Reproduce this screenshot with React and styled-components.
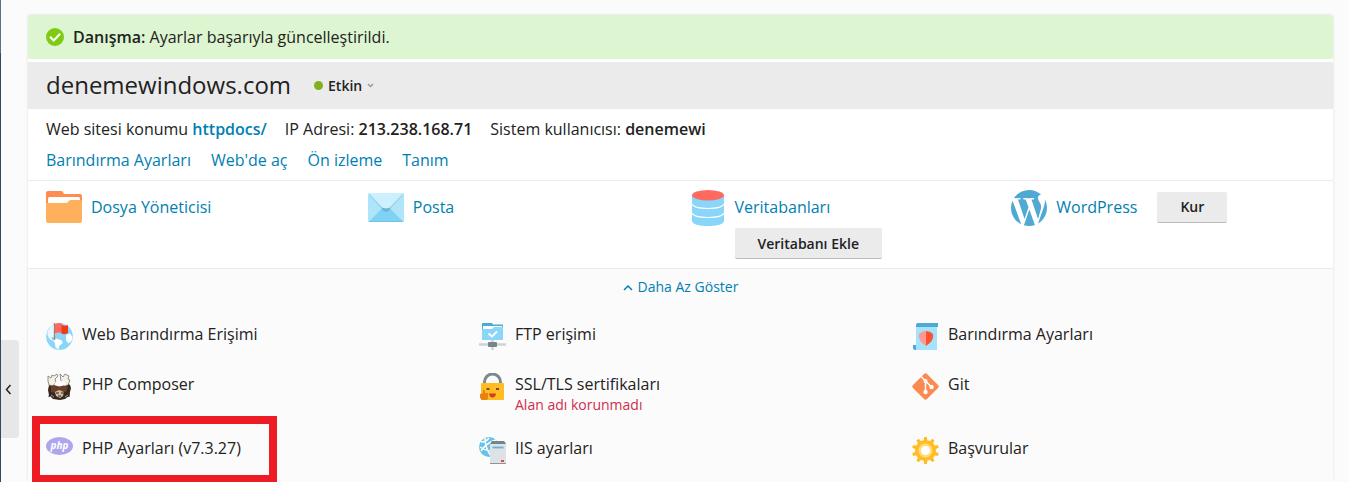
import React from 'react';
import styled, { createGlobalStyle } from 'styled-components';

const GlobalStyle = createGlobalStyle`
	*, *::before, *::after {
		box-sizing: border-box;
	}

	body {
		margin: 0;
		background: #fbfbfb;
		color: #222;
		font: 16px/24px 'Open Sans', sans-serif;
	}

	button {
		font-family: inherit;
		color: inherit;
		cursor: pointer;
	}

	svg {
		display: block;
		flex: none;
	}
`;

const Page = styled.div`
	display: flex;
	min-height: 100vh;
	overflow: hidden;
`;

const Gutter = styled.aside`
	width: 28px;
	flex: none;
	padding: 340px 0 0 1px;
	background: linear-gradient(#54718e 53px, #34495e 53px) left / 1px 100% no-repeat;
`;

const Collapse = styled.button`
	display: flex;
	align-items: center;
	justify-content: center;
	width: 18px;
	height: 98px;
	padding: 0 4px 0 0;
	border: 0;
	border-radius: 0 4px 4px 0;
	background: #e7e7e7;
`;

const Main = styled.main`
	flex: 1;
	min-width: 0;
	padding: 15px 16px 0 0;
	display: flex;
`;

const Card = styled.section`
	flex: 1;
	min-width: 0;
	background: #fff;
	border-radius: 2px;
	box-shadow: 0 0 3px rgba(0, 0, 0, 0.12);
`;

const Alert = styled.div`
	display: flex;
	align-items: center;
	gap: 9px;
	height: 44px;
	padding: 0 18px;
	border-radius: 2px;
	background: #ddf5d0;
	margin-bottom: 3px;
`;

const Strong = styled.strong`
	font-weight: 600;
`;

const Header = styled.header`
	display: flex;
	align-items: center;
	gap: 23px;
	height: 47px;
	padding: 0 18px;
	background: #ebebeb;
`;

const Title = styled.h1`
	margin: 0;
	padding-bottom: 2px;
	font-size: 24px;
	line-height: 32px;
	font-weight: 400;
`;

const Status = styled.button`
	display: flex;
	align-items: center;
	gap: 5px;
	padding: 0;
	border: 0;
	background: none;
	font-size: 14px;
	line-height: 20px;
	font-weight: 600;
`;

const Dot = styled.span`
	width: 9px;
	height: 9px;
	border-radius: 50%;
	background: #82b022;
`;

const Info = styled.div`
	display: flex;
	flex-direction: column;
	gap: 7px;
	padding: 8px 18px;
	border-bottom: 1px solid #ebebeb;
`;

const InfoRow = styled.div`
	display: flex;
	flex-wrap: wrap;
	gap: 0 18px;
`;

const TextLink = styled.a`
	color: #0080b2;
	text-decoration: none;
	font-weight: ${({ $bold }) => ($bold ? 600 : 400)};
`;

const LinkRow = styled(InfoRow)`
	gap: 0 20px;
`;

const Tools = styled.div`
	display: grid;
	grid-template-columns: repeat(4, 1fr);
	gap: 18px;
	padding: 9px 18px;
	border-bottom: 1px solid #ebebeb;
`;

const Tool = styled.div`
	display: flex;
	align-items: flex-start;
	gap: 9px;
`;

const ToolBody = styled.div`
	display: flex;
	flex-direction: ${({ $inline }) => ($inline ? 'row' : 'column')};
	align-items: ${({ $inline }) => ($inline ? 'center' : 'flex-start')};
	gap: ${({ $inline }) => ($inline ? '20px' : '4px')};
	line-height: 34px;
`;

const Button = styled.button`
	height: 31px;
	padding: 1px 23px 0;
	border: 0;
	border-bottom: 1px solid #bbb;
	border-radius: 2px;
	background: #ebebeb;
	font-size: 14px;
	line-height: 20px;
	font-weight: 600;
`;

const More = styled.div`
	background: #fbfbfb;
	padding: 8px 18px 18px;
`;

const Toggle = styled.button`
	display: flex;
	align-items: center;
	gap: 5px;
	margin: 0 auto 25px;
	padding: 0;
	border: 0;
	background: none;
	font-size: 14px;
	line-height: 20px;

	&& {
		color: #0080b2;
	}
`;

const Grid = styled.ul`
	display: grid;
	grid-template-columns: repeat(3, 1fr);
	gap: 22px 30px;
	margin: 0;
	padding: 0;
	list-style: none;
`;

const GridItem = styled.li`
	position: relative;
	display: flex;
	align-items: flex-start;
	gap: 9px;
	min-height: 28px;

	svg {
		margin-top: 1px;
	}
`;

const ItemLink = styled.a`
	display: block;
	color: #222;
	text-decoration: none;
`;

const Warning = styled.span`
	display: block;
	color: #d02d4e;
	font-size: 14px;
	line-height: 18px;
`;

const Highlight = styled.span`
	position: absolute;
	top: -20px;
	left: -14px;
	width: 245px;
	height: 67px;
	border: 8px solid #ed1c24;
	pointer-events: none;
`;

const Chevron = ({ d, width, height, color }) => (
	<svg width={width} height={height} viewBox={`0 0 ${width} ${height}`} fill="none" stroke={color} strokeWidth="1.5">
		<path d={d} />
	</svg>
);

const CheckIcon = () => (
	<svg width="18" height="18" viewBox="0 0 18 18">
		<circle cx="9" cy="9" r="9" fill="#7fcb14" />
		<path d="M4 8.8l3.7 3.7 6.4-6.7" fill="none" stroke="#fff" strokeWidth="2" />
	</svg>
);

const FolderIcon = () => (
	<svg width="36" height="36" viewBox="0 0 36 36">
		<path d="M0 30V3q0-2 2-2h13q2 0 2.5 2l.5 1h16q2 0 2 2v14H0z" fill="#ff8c50" />
		<path d="M2 14V8.500q0-1.500 1.500-1.500h29Q34 7 34 8.500V14z" fill="#fff" />
		<path d="M0 14q0-1 1.500-1H20q1.500 0 2-1l1-1.500q.5-.5 2-.5H34q2 0 2 1.500V31q0 2-2 2H2q-2 0-2-2z" fill="#ffb05c" />
	</svg>
);

const MailIcon = () => (
	<svg width="36" height="36" viewBox="0 0 36 36">
		<rect y="3" width="36" height="29" rx="1.5" fill="#aee5fb" />
		<path d="M1 31.5L14.500 18h7L35 31.500l-1 .5H2z" fill="#7fd2f3" />
		<path d="M1 4l13 13.500q4 3.500 8 0L35 4l-1 2-12 13q-4 3.500-8 0L2 6z" fill="#9ccbdc" />
		<path d="M1 3h34L22 17q-4 3.500-8 0z" fill="#cdf0ff" />
		<path d="M13.500 17.500q4.500 2 9 0-.5 2-2 3.500-2.500 1-5 0-1.500-1.500-2-3.500z" fill="#6cb4d3" />
		<path d="M1 31.500h34" stroke="#6fc3e6" />
	</svg>
);

const DatabaseIcon = () => (
	<svg width="36" height="36" viewBox="0 0 36 36">
		<path d="M2 5v26c0 3 7 5 16 5s16-2 16-5V5z" fill="#8ad6f8" />
		<path d="M2 14c1 3 8 4.5 16 4.5S33 17 34 14M2 23c1 3 8 4.5 16 4.500S33 26 34 23" fill="none" stroke="#fff" strokeWidth="1.1" />
		<ellipse cx="18" cy="5.200" rx="16" ry="5.200" fill="#ff6a60" />
	</svg>
);

const WordPressIcon = () => (
	<svg width="36" height="36" viewBox="43 43 426 426" fill="#4fa9d2">
		<path d="M61.7 169.4l101.5 278C92.2 413 43.3 340.2 43.3 256c0-30.9 6.6-60.1 18.4-86.6zm337.9 75.9c0-26.3-9.4-44.5-17.5-58.7-10.8-17.5-20.9-32.4-20.9-49.9 0-19.6 14.8-37.8 35.7-37.8.9 0 1.8.1 2.8.2-37.9-34.7-88.3-55.9-143.7-55.9-74.3 0-139.7 38.1-177.8 95.9 5 .2 9.7.3 13.7.3 22.2 0 56.7-2.7 56.7-2.7 11.5-.7 12.8 16.2 1.4 17.5 0 0-11.5 1.3-24.3 2l77.5 230.4L249.8 247l-33.1-90.8c-11.5-.7-22.3-2-22.3-2-11.5-.7-10.1-18.2 1.3-17.5 0 0 35.1 2.7 56 2.7 22.2 0 56.7-2.7 56.7-2.7 11.5-.7 12.8 16.2 1.4 17.5 0 0-11.5 1.3-24.3 2l76.9 228.7 21.2-70.9c9-29.4 16-50.5 16-68.7zm-139.9 29.3l-63.8 185.5c19.1 5.6 39.2 8.7 60.1 8.7 24.8 0 48.5-4.3 70.6-12.1-.6-.9-1.1-1.9-1.5-2.9l-65.4-179.2zm183-120.7c.9 6.8 1.4 14 1.4 21.9 0 21.6-4 45.8-16.2 76.2l-65 187.9C426.2 403 468.7 334.5 468.7 256c0-37-9.4-71.800-26-102.100z" />
	</svg>
);

const SmallIcon = ({ children }) => (
	<svg width="27" height="27" viewBox="0 0 27 27">
		{children}
	</svg>
);

const WebAccessIcon = () => (
	<SmallIcon>
		<circle cx="13.5" cy="13.5" r="13.3" fill="#8ad6f8" />
		<path d="M2 7.500Q4.500 3 8 1.500V9l2 2-2 3-3 .5L7 18l-3-1.500Q0 12 2 7.500z" fill="#fff" opacity=".8" />
		<path d="M7 17l3-1.500 6 2 .5 3-3 2-1 4-3-2-.5-4zM20 12l4-1.500 2.500 3.500-1 4-3 2.500-2.500-3z" fill="#fff" />
		<path d="M9 1q4-2 7.500 0v9Q13 9 9 10.500z" fill="#ff6a60" />
		<path d="M15.500 2q3 1.500 6.500 0v8q-3 2-6.500.5z" fill="#f03a17" />
		<path d="M8.500 0v17" stroke="#ae7b5b" strokeWidth="1.3" />
	</SmallIcon>
);

const ComposerIcon = () => (
	<SmallIcon>
		<path d="M3 12l3-2h15l3 2 1 3-2 8-4 3-5 1-7-1-4-4-1-5z" fill="#34291f" />
		<path d="M2 3l3 2 1-3 2 1 3-2 1 2-3 3 1 3-3 4-4-1-1-4zM14 1l3 3 2-3 2 1 2 1-1 3 2 1-2 5-4 1-3-5z" fill="#f5f0e6" stroke="#77736b" strokeWidth=".8" />
		<path d="M8 12q1-4 6-4t6 4l-3 2-8-1z" fill="#fff" />
		<path d="M5 13q4-2 8 1 5-3 9 0l-2 5-6-1-4 2-5-1z" fill="#684025" />
		<path d="M9 19l4-2 5 2-1 4-3 2-4-2z" fill="#d5b9a0" />
		<path d="M10 20h3M15 20h3M12 23h3M4 20l-1 4M23 20v4" stroke="#29221d" strokeWidth="1.2" />
		<path d="M5 22l3 2M19 24l3-2" stroke="#999" />
	</SmallIcon>
);

const PhpIcon = () => (
	<SmallIcon>
		<ellipse cx="13.5" cy="9" rx="13.5" ry="9" fill="#aea5ec" />
		<text x="13.5" y="12" textAnchor="middle" fill="#fff" fontFamily="'Open Sans', sans-serif" fontSize="10" fontWeight="700" fontStyle="italic">php</text>
	</SmallIcon>
);

const FtpIcon = () => (
	<SmallIcon>
		<path d="M3 0h10l1 1.500h10V8H3z" fill="#4cabd2" />
		<path d="M4 3h19v4H4z" fill="#fff" />
		<path d="M3 6h10l2-2h9v13H3z" fill="#8ad6f8" />
		<path d="M9.500 10.500l3.500 3 5-5" fill="none" stroke="#fff" strokeWidth="1.8" />
		<path d="M0 21.500h27M13.500 17v10" stroke="#ccd4da" strokeWidth="2.5" />
		<rect x="9" y="19" width="9" height="5" rx="1" fill="#78838a" />
	</SmallIcon>
);

const LockIcon = () => (
	<SmallIcon>
		<path d="M5.500 12V9a8 8 0 0 1 16 0v3" fill="none" stroke="#7e898f" strokeWidth="3" />
		<rect x="2" y="10" width="23" height="17" rx="1" fill="#ffbd22" />
		<path d="M7.500 16h3M17 16h3" stroke="#765020" strokeWidth="2" />
		<path d="M10 20.500h7q-.5 4-3.500 4t-3.500-4z" fill="#d83a20" />
		<path d="M1 21l3-1v-3q2-1 2 3h3v5q0 2-2 2H3q-2-1-2-3z" fill="#e58413" />
	</SmallIcon>
);

const IisIcon = () => (
	<SmallIcon>
		<circle cx="10" cy="10" r="10" fill="#67c2e8" />
		<path d="M2 5q5 0 8-4M2 14q5-8 15-11M6 1q0 10 6 18M1 10q6 4 12 4" fill="none" stroke="#fff" strokeWidth="1.5" />
		<path d="M11 6l2-2h12l2 2v21H11z" fill="#dce2e6" />
		<path d="M11 7l2-3h12l2 3z" fill="#78838a" />
		<path d="M13.500 10.500h11" stroke="#60b5d9" strokeWidth="1.8" />
		<path d="M22 24h3" stroke="#ee4b32" strokeWidth="2" />
		<path d="M11 26.500h16" stroke="#89949b" />
	</SmallIcon>
);

const HostingIcon = () => (
	<SmallIcon>
		<path d="M1 22h4v5H3q-2 0-2-2z" fill="#4fa9d2" />
		<path d="M4 2h21v25H4z" fill="#a3e4fc" />
		<path d="M4 2q0-2 2-2h20v4H4z" fill="#4fa9d2" />
		<path d="M14 8q-4 0-7 3c-1 6 3 9 7 12z" fill="#ff9893" />
		<path d="M14 8q4 0 7 3c1 6-3 9-7 12z" fill="#ff5330" />
	</SmallIcon>
);

const GitIcon = () => (
	<SmallIcon>
		<path d="M12 1q1.500-1.500 3 0l11 11q1.500 1.500 0 3L15 26q-1.500 1.500-3 0L1 15q-1.500-1.500 0-3z" fill="#fb8a50" />
		<path d="M9 3.500L13.500 8v11M13.500 8l6 6" fill="none" stroke="#fff" strokeWidth="1.5" />
		<circle cx="13.5" cy="8" r="2" fill="#fff" />
		<circle cx="13.5" cy="19" r="2.2" fill="#fff" />
		<circle cx="19.5" cy="14" r="2.2" fill="#fff" />
	</SmallIcon>
);

const TEETH = [0, 36, 72, 108, 144, 180, 216, 252, 288, 324];

const GearIcon = () => (
	<SmallIcon>
		{TEETH.map((angle) => (
			<path key={angle} d="M11.500 5l.6-5h2.800l.6 5z" fill="#ffbd22" transform={`rotate(${angle} 13.5 13.5)`} />
		))}
		<circle cx="13.5" cy="13.5" r="8" fill="#fff" stroke="#ffbd22" strokeWidth="5" />
		<circle cx="13.5" cy="13.5" r="5.8" fill="#fff" stroke="#ffdc80" strokeWidth="2.5" />
	</SmallIcon>
);

const items = [
	{ label: 'Web Barındırma Erişimi', Icon: WebAccessIcon },
	{ label: 'FTP erişimi', Icon: FtpIcon },
	{ label: 'Barındırma Ayarları', Icon: HostingIcon },
	{ label: 'PHP Composer', Icon: ComposerIcon },
	{ label: 'SSL/TLS sertifikaları', Icon: LockIcon, warning: 'Alan adı korunmadı' },
	{ label: 'Git', Icon: GitIcon },
	{ label: 'PHP Ayarları (v7.3.27)', Icon: PhpIcon, highlighted: true },
	{ label: 'IIS ayarları', Icon: IisIcon },
	{ label: 'Başvurular', Icon: GearIcon },
];

const tools = [
	{ label: 'Dosya Yöneticisi', Icon: FolderIcon },
	{ label: 'Posta', Icon: MailIcon },
	{ label: 'Veritabanları', Icon: DatabaseIcon, action: 'Veritabanı Ekle' },
	{ label: 'WordPress', Icon: WordPressIcon, action: 'Kur', inline: true },
];

const links = ['Barındırma Ayarları', 'Web\'de aç', 'Ön izleme', 'Tanım'];

const App = () => (
	<Page>
		<GlobalStyle />
		<Gutter>
			<Collapse type="button" aria-label="Menü">
				<Chevron d="M5.500 1L1.500 5.500l4 4.500" width={7} height={11} color="#222" />
			</Collapse>
		</Gutter>
		<Main>
			<Card>
				<Alert role="status">
					<CheckIcon />
					<span>
						<Strong>Danışma:</Strong> Ayarlar başarıyla güncelleştirildi.
					</span>
				</Alert>
				<Header>
					<Title>denemewindows.com</Title>
					<Status type="button">
						<Dot />
						Etkin
						<Chevron d="M1 1l2.500 2.500L6 1" width={7} height={5} color="#999" />
					</Status>
				</Header>
				<Info>
					<InfoRow>
						<span>
							Web sitesi konumu <TextLink href="#httpdocs" $bold>httpdocs/</TextLink>
						</span>
						<span>
							IP Adresi: <Strong>213.238.168.71</Strong>
						</span>
						<span>
							Sistem kullanıcısı: <Strong>denemewi</Strong>
						</span>
					</InfoRow>
					<LinkRow>
						{links.map((link) => (
							<TextLink key={link} href="#">{link}</TextLink>
						))}
					</LinkRow>
				</Info>
				<Tools>
					{tools.map(({ label, Icon, action, inline }) => (
						<Tool key={label}>
							<Icon />
							<ToolBody $inline={inline}>
								<TextLink href="#">{label}</TextLink>
								{action && <Button type="button">{action}</Button>}
							</ToolBody>
						</Tool>
					))}
				</Tools>
				<More>
					<Toggle type="button">
						<Chevron d="M1 6l4-4 4 4" width={10} height={7} color="#0080b2" />
						Daha Az Göster
					</Toggle>
					<Grid>
						{items.map(({ label, Icon, warning, highlighted }) => (
							<GridItem key={label}>
								<Icon />
								<ItemLink href="#">
									{label}
									{warning && <Warning>{warning}</Warning>}
								</ItemLink>
								{highlighted && <Highlight />}
							</GridItem>
						))}
					</Grid>
				</More>
			</Card>
		</Main>
	</Page>
);

export default App;
